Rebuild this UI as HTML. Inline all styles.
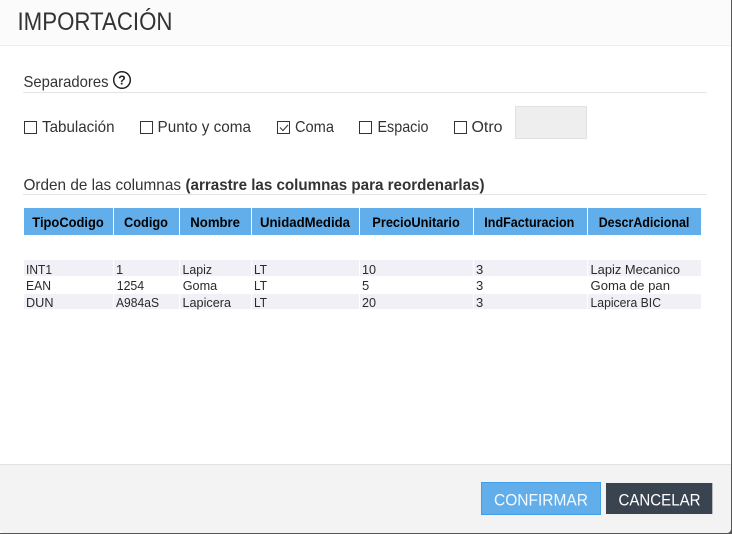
<!DOCTYPE html>
<html lang="es">
<head>
<meta charset="utf-8">
<title>Importación</title>
<style>
html,body{margin:0;padding:0;width:732px;height:534px;overflow:hidden;background:#fff}
svg{display:block}
text{font-family:"Liberation Sans",Arial,sans-serif;fill:#333}
.l{font-size:16px}
.h{font-size:13.500px;font-weight:bold;fill:#000}
.c{font-size:13px;fill:#2a2a2a}
</style>
</head>
<body>
<svg width="732" height="534" viewBox="0 0 732 534" xmlns="http://www.w3.org/2000/svg">
<rect width="732" height="534" fill="#555"/>
<rect x="-6" y="-6" width="737" height="539" rx="5" fill="#fff"/>
<path d="M0 0H731V45H0Z" fill="#fbfbfb"/>
<rect x="0" y="45" width="731" height="1" fill="#eee"/>
<path d="M0 465H731V529a4 4 0 0 1-4 4H4a4 4 0 0 1-4-4Z" fill="#f3f3f3"/>
<rect x="0" y="464" width="731" height="1" fill="#e2e2e2"/>

<text x="17.500" y="30" font-size="25" textLength="155" lengthAdjust="spacingAndGlyphs">IMPORTACIÓN</text>

<text class="l" x="23.500" y="87" textLength="85" lengthAdjust="spacingAndGlyphs">Separadores</text>
<circle cx="122" cy="80" r="8.300" fill="none" stroke="#222" stroke-width="1.500"/>
<text x="122" y="84.500" font-size="12.500" font-weight="bold" text-anchor="middle" style="fill:#222">?</text>
<rect x="23" y="92" width="684" height="1" fill="#e4e4e4"/>

<g fill="#fff" stroke="#333" stroke-width="1">
<rect x="24.500" y="121.500" width="12" height="12"/>
<rect x="140.500" y="121.500" width="12" height="12"/>
<rect x="277.500" y="121.500" width="12" height="12"/>
<rect x="359.500" y="121.500" width="12" height="12"/>
<rect x="454.500" y="121.500" width="12" height="12"/>
</g>
<path d="M280 127.500l3 3 5-5.500" fill="none" stroke="#444" stroke-width="1.200"/>
<text class="l" x="42" y="132" textLength="72.500" lengthAdjust="spacingAndGlyphs">Tabulación</text>
<text class="l" x="157.500" y="132" textLength="93.500" lengthAdjust="spacingAndGlyphs">Punto y coma</text>
<text class="l" x="295" y="132" textLength="39" lengthAdjust="spacingAndGlyphs">Coma</text>
<text class="l" x="377.500" y="132" textLength="51" lengthAdjust="spacingAndGlyphs">Espacio</text>
<text class="l" x="471.500" y="132" textLength="31" lengthAdjust="spacingAndGlyphs">Otro</text>
<rect x="515.500" y="106.500" width="71" height="32" fill="#eee" stroke="#e0e0e0" stroke-width="1"/>

<text class="l" x="23.500" y="190" textLength="157.500" lengthAdjust="spacingAndGlyphs">Orden de las columnas</text>
<text class="l" x="185.500" y="190" font-weight="bold" textLength="299" lengthAdjust="spacingAndGlyphs">(arrastre las columnas para reordenarlas)</text>
<rect x="23" y="194" width="684" height="1" fill="#e4e4e4"/>

<g fill="#62aeea">
<rect x="24" y="208" width="89" height="27"/>
<rect x="114" y="208" width="65" height="27"/>
<rect x="180" y="208" width="71" height="27"/>
<rect x="252" y="208" width="107" height="27"/>
<rect x="360" y="208" width="113" height="27"/>
<rect x="474" y="208" width="113" height="27"/>
<rect x="588" y="208" width="113" height="27"/>
</g>
<text class="h" x="32.300" y="227" textLength="71.500" lengthAdjust="spacingAndGlyphs">TipoCodigo</text>
<text class="h" x="124" y="227" textLength="44" lengthAdjust="spacingAndGlyphs">Codigo</text>
<text class="h" x="190.300" y="227" textLength="49.700" lengthAdjust="spacingAndGlyphs">Nombre</text>
<text class="h" x="260" y="227" textLength="90" lengthAdjust="spacingAndGlyphs">UnidadMedida</text>
<text class="h" x="372.300" y="227" textLength="87.500" lengthAdjust="spacingAndGlyphs">PrecioUnitario</text>
<text class="h" x="484.300" y="227" textLength="90" lengthAdjust="spacingAndGlyphs">IndFacturacion</text>
<text class="h" x="598.700" y="227" textLength="90.700" lengthAdjust="spacingAndGlyphs">DescrAdicional</text>

<g fill="#f0f0f6">
<rect x="24" y="260" width="89" height="16"/>
<rect x="114" y="260" width="65" height="16"/>
<rect x="180" y="260" width="71" height="16"/>
<rect x="252" y="260" width="107" height="16"/>
<rect x="360" y="260" width="113" height="16"/>
<rect x="474" y="260" width="113" height="16"/>
<rect x="588" y="260" width="113" height="16"/>
<rect x="24" y="294" width="89" height="15"/>
<rect x="114" y="294" width="65" height="15"/>
<rect x="180" y="294" width="71" height="15"/>
<rect x="252" y="294" width="107" height="15"/>
<rect x="360" y="294" width="113" height="15"/>
<rect x="474" y="294" width="113" height="15"/>
<rect x="588" y="294" width="113" height="15"/>
</g>

<text class="c" x="26" y="274" textLength="26" lengthAdjust="spacingAndGlyphs">INT1</text>
<text class="c" x="116" y="274">1</text>
<text class="c" x="182.500" y="274" textLength="29.500" lengthAdjust="spacingAndGlyphs">Lapiz</text>
<text class="c" x="254" y="274" textLength="13" lengthAdjust="spacingAndGlyphs">LT</text>
<text class="c" x="362" y="274" textLength="14" lengthAdjust="spacingAndGlyphs">10</text>
<text class="c" x="476" y="274">3</text>
<text class="c" x="590.500" y="274" textLength="89.500" lengthAdjust="spacingAndGlyphs">Lapiz Mecanico</text>

<text class="c" x="26" y="290" textLength="25" lengthAdjust="spacingAndGlyphs">EAN</text>
<text class="c" x="116.700" y="290" textLength="27.500" lengthAdjust="spacingAndGlyphs">1254</text>
<text class="c" x="182.700" y="290" textLength="34.500" lengthAdjust="spacingAndGlyphs">Goma</text>
<text class="c" x="254" y="290" textLength="13" lengthAdjust="spacingAndGlyphs">LT</text>
<text class="c" x="362" y="290">5</text>
<text class="c" x="476" y="290">3</text>
<text class="c" x="590.500" y="290" textLength="79.500" lengthAdjust="spacingAndGlyphs">Goma de pan</text>

<text class="c" x="26" y="307" textLength="27.500" lengthAdjust="spacingAndGlyphs">DUN</text>
<text class="c" x="116" y="307" textLength="43" lengthAdjust="spacingAndGlyphs">A984aS</text>
<text class="c" x="182.500" y="307" textLength="48.500" lengthAdjust="spacingAndGlyphs">Lapicera</text>
<text class="c" x="254" y="307" textLength="13" lengthAdjust="spacingAndGlyphs">LT</text>
<text class="c" x="362" y="307" textLength="14" lengthAdjust="spacingAndGlyphs">20</text>
<text class="c" x="476" y="307">3</text>
<text class="c" x="590.500" y="307" textLength="70.500" lengthAdjust="spacingAndGlyphs">Lapicera BIC</text>

<rect x="481.500" y="482.500" width="119" height="32" fill="#62aeea" stroke="#3f9fea" stroke-width="1"/>
<text x="494" y="505.500" font-size="17" textLength="94" lengthAdjust="spacingAndGlyphs" style="fill:#f4faff">CONFIRMAR</text>
<rect x="605.500" y="482.500" width="107.500" height="32" fill="#eee"/>
<rect x="606" y="483" width="106.300" height="31" fill="#3a4350"/>
<text x="618.500" y="505.500" font-size="17" textLength="82" lengthAdjust="spacingAndGlyphs" style="fill:#fff">CANCELAR</text>
</svg>
</body>
</html>
